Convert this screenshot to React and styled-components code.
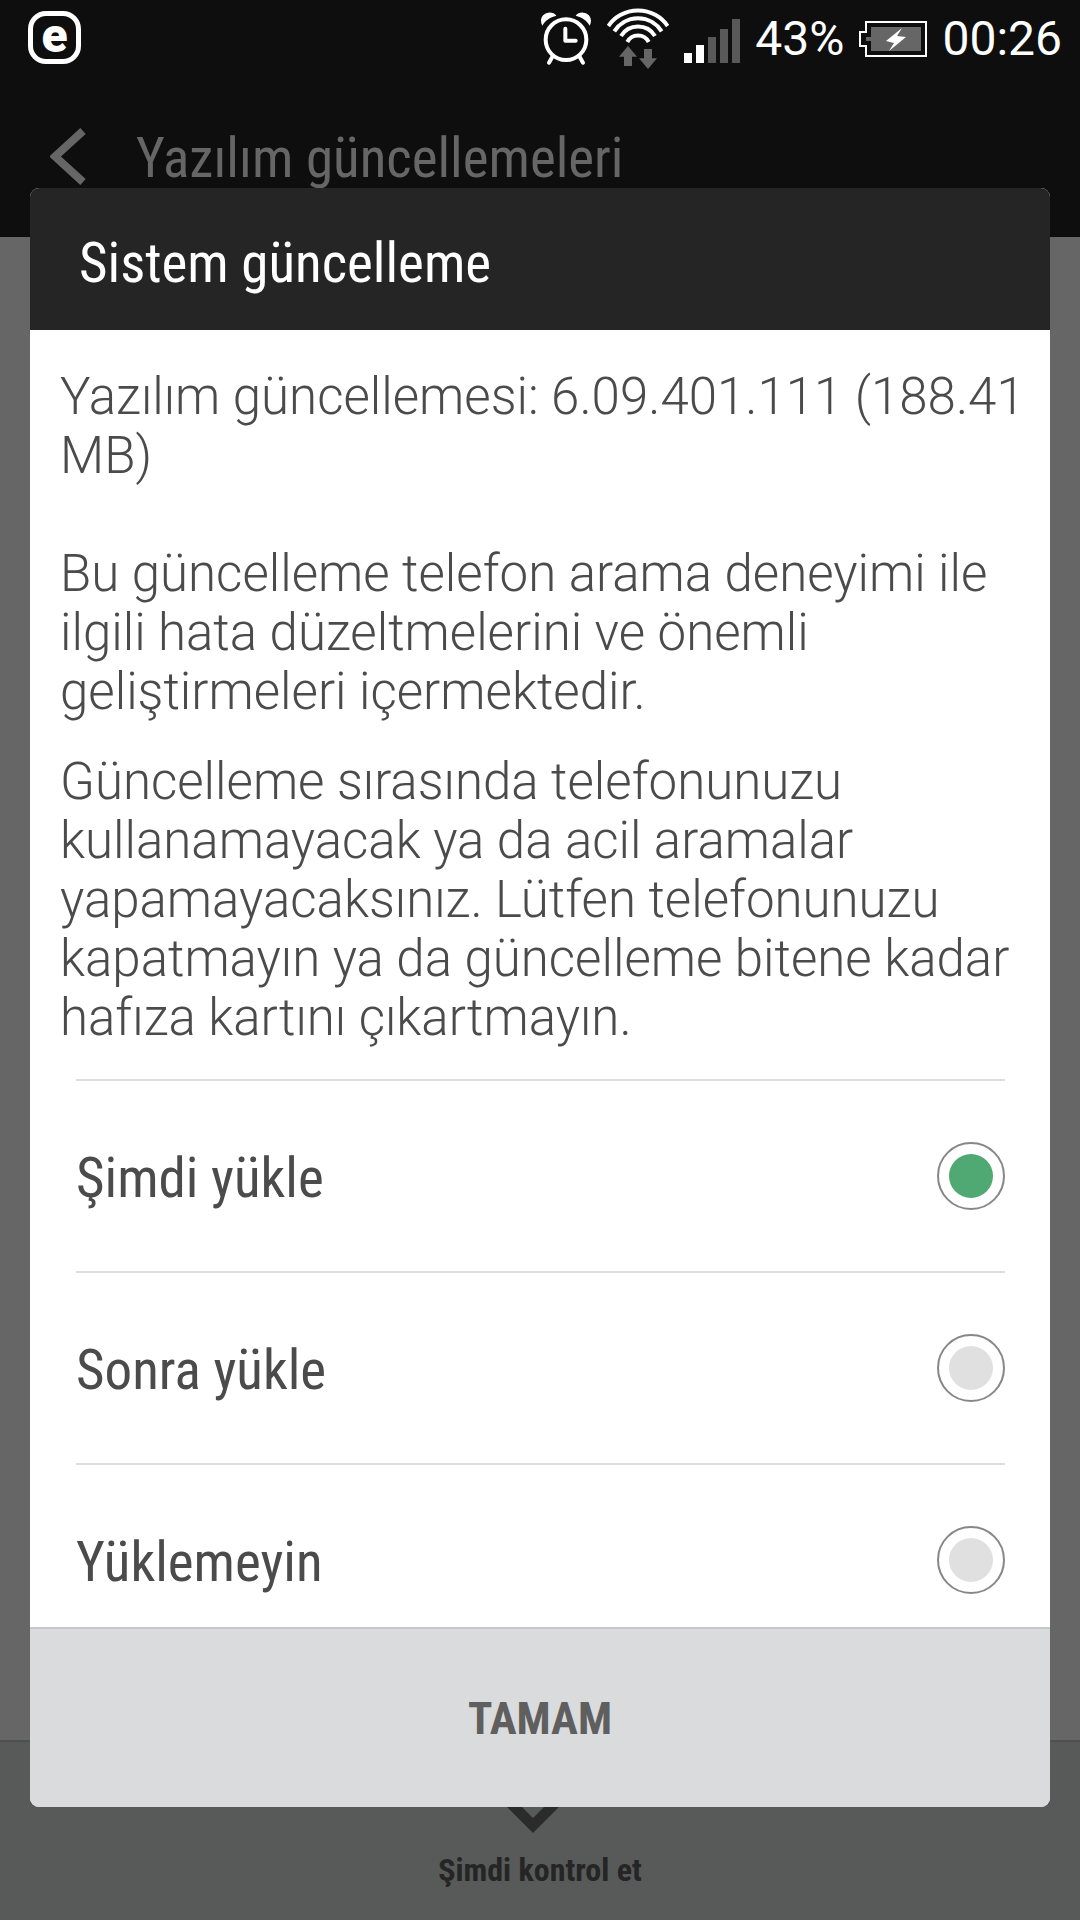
import { useState } from "react";
import styled, { createGlobalStyle } from "styled-components";

const options = [
    { id: "now", label: "Şimdi yükle" },
    { id: "later", label: "Sonra yükle" },
    { id: "never", label: "Yüklemeyin" },
];

function App() {

    // install right away is the default choice
    const [choice, setChoice] = useState("now");

  return (
    <Screen>
            <GlobalStyle />
            <StatusBar>
                <AppBadge>e</AppBadge>
                <StatusGroup>
                    <AlarmIcon />
                    <WifiIcon />
                    <SignalIcon />
                    <span>43%</span>
                    <BatteryIcon />
                    <span>00:26</span>
                </StatusGroup>
            </StatusBar>
            <ActionBar>
                <BackButton aria-label="Geri">
                    <svg width="36" height="57" viewBox="0 0 36 57">
                        <path d="M33 3 L5 28.5 L33 54" fill="none" stroke="#666" strokeWidth="8" />
                    </svg>
                </BackButton>
                <PageTitle>Yazılım güncellemeleri</PageTitle>
            </ActionBar>
            <Content />
            <BottomBar>
                <CheckButton>
                    <svg width="66" height="60" viewBox="0 0 66 60">
                        <path d="M26 0 V20 M2 21.5 L26 45.5 L50 21.5" fill="none" stroke="#2b2b2b" strokeWidth="10.5" />
                    </svg>
                    Şimdi kontrol et
                </CheckButton>
            </BottomBar>

            <Overlay>
                <Dialog role="dialog" aria-labelledby="dialog-title">
                    <DialogTitle id="dialog-title">Sistem güncelleme</DialogTitle>
                    <DialogBody>
                        <Message>
                            <p>Yazılım güncellemesi: 6.09.401.111 (188.41 MB)</p>
                            <br />
                            <p>Bu güncelleme telefon arama deneyimi ile ilgili hata düzeltmelerini ve önemli geliştirmeleri içermektedir.</p>
                            <Warning>Güncelleme sırasında telefonunuzu kullanamayacak ya da acil aramalar yapamayacaksınız. Lütfen telefonunuzu kapatmayın ya da güncelleme bitene kadar hafıza kartını çıkartmayın.</Warning>
                        </Message>
                        <OptionList>
                            {options.map((option) => (
                                <Option key={option.id}>
                                    <OptionLabel htmlFor={option.id}>{option.label}</OptionLabel>
                                    <Radio
                                        id={option.id}
                                        type="radio"
                                        name="install"
                                        checked={choice === option.id}
                                        onChange={() => setChoice(option.id)}
                                    />
                                </Option>
                            ))}
                        </OptionList>
                    </DialogBody>
                    <ConfirmButton>TAMAM</ConfirmButton>
                </Dialog>
            </Overlay>
    </Screen>
  )
}

function AlarmIcon() {
    return (
        <svg width="52" height="54" viewBox="57 32 156 162">
            <circle cx="135" cy="115" r="61" fill="none" stroke="#fff" strokeWidth="12" />
            <path d="M133 82 V118 H164" fill="none" stroke="#fff" strokeWidth="12" strokeLinecap="round" strokeLinejoin="round" />
            <path d="M95 165 L84 184 M175 165 L186 184" stroke="#fff" strokeWidth="12" strokeLinecap="round" />
            <path d="M64 73 C54 54 64 36 83 34 C93 33 101 37 106 43 C87 48 72 58 64 73 Z" fill="#fff" />
            <path d="M206 73 C216 54 206 36 187 34 C177 33 169 37 164 43 C183 48 198 58 206 73 Z" fill="#fff" />
        </svg>
    )
}

function WifiIcon() {
    return (
        <svg width="62" height="62" viewBox="264 21 186 186">
            <g fill="none" stroke="#fff" strokeWidth="12">
                <path d="M268 75 A108 108 0 0 1 446 75" />
                <path d="M286 91 A84 84 0 0 1 428 91" />
                <path d="M306 105 A60 60 0 0 1 408 105" />
                <path d="M325 123 A36 36 0 0 1 389 123" />
            </g>
            <path d="M327 135 L354 167 H339 V195 H315 V167 H300 Z" fill="#666" />
            <path d="M387 204 L414 172 H399 V144 H375 V172 H360 Z" fill="#666" />
        </svg>
    )
}

function SignalIcon() {
    return (
        <svg width="56" height="44" viewBox="0 0 56 44" overflow="visible">
            <path d="M0 36 h8 v10 h-8 Z M12 28 h8 v18 h-8 Z" fill="#fff" />
            <path d="M24 20 h8 v26 h-8 Z M36 12 h8 v34 h-8 Z M48 2 h8 v44 h-8 Z" fill="#595959" />
        </svg>
    )
}

function BatteryIcon() {
    return (
        <svg width="68" height="36" viewBox="0 0 68 36">
            <path d="M7 1 H67 V35 H7 V25 H1 V11 H7 Z" fill="none" stroke="#fff" strokeWidth="2" />
            <path d="M12 6 H62 V30 H12 V20 H7 V16 H12 Z" fill="#666" />
            <path d="M43 7 L27 20 L35 22 L30 30 L47 16 L38 15 Z" fill="#fff" />
        </svg>
    )
}

const GlobalStyle = createGlobalStyle`
    *{
        box-sizing:border-box;
    }
    body{
        margin:0;
        font-family:Roboto, sans-serif;
    }
    button{
        border:none;
        padding:0;
        background:none;
        font-family:inherit;
    }
    svg{
        flex-shrink:0;
    }
`
const Screen = styled.div`
    position:relative;
    min-height:100vh;
    display:flex;
    flex-direction:column;
    background:#666;
`
const StatusBar = styled.header`
    height:75px;
    padding:0 18px 0 28px;
    display:flex;
    align-items:center;
    justify-content:space-between;
    background:#0e0e0e;
    color:white;
`
const AppBadge = styled.span`
    width:53px;
    height:53px;
    border:5px solid white;
    border-radius:18px;
    display:flex;
    align-items:center;
    justify-content:center;
    padding-bottom:4px;
    font-size:48px;
    line-height:1;
    font-weight:900;
`
const StatusGroup = styled.div`
    display:flex;
    align-items:center;
    gap:15px;
    font-size:48px;
    line-height:58px;
    padding-top:2px;
`
const ActionBar = styled.nav`
    height:162px;
    padding:0 50px;
    display:flex;
    align-items:center;
    gap:50px;
    background:#0e0e0e;
`
const BackButton = styled.button`
    display:flex;
`
const PageTitle = styled.h1`
    margin:0;
    padding-top:4px;
    font-family:"Roboto Condensed", Roboto, sans-serif;
    font-size:55px;
    font-weight:400;
    color:#666;
`
const Content = styled.main`
    flex:1;
`
const BottomBar = styled.footer`
    height:180px;
    border-top:2px solid #505050;
    background:#575a59;
`
const CheckButton = styled.button`
    width:100%;
    height:100%;
    padding-bottom:31px;
    display:flex;
    flex-direction:column;
    align-items:center;
    justify-content:flex-end;
    gap:11px;
    font-family:"Roboto Condensed", Roboto, sans-serif;
    font-size:32px;
    font-weight:700;
    color:#252525;
`
const Overlay = styled.div`
    position:absolute;
    inset:0;
    padding:188px 30px 113px;
    display:flex;
`
const Dialog = styled.section`
    flex:1;
    display:flex;
    flex-direction:column;
    border-radius:9px;
    overflow:hidden;
    background:white;
`
const DialogTitle = styled.h2`
    margin:0;
    padding:0 49px;
    height:142px;
    line-height:150px;
    background:#252525;
    color:white;
    font-family:"Roboto Condensed", Roboto, sans-serif;
    font-size:55px;
    font-weight:400;
`
const DialogBody = styled.div`
    flex:1 1 0;
    min-height:0;
    overflow:hidden;
`
const Message = styled.div`
    padding:37px 22px 32px 30px;
    font-size:51px;
    line-height:59px;
    font-weight:300;
    color:#4b4b4b;
    p{
        margin:0;
    }
`
const Warning = styled.p`
    && {
        margin-top:31px;
    }
`
const OptionList = styled.div`
    padding:0 45px 0 46px;
`
const Option = styled.div`
    height:192px;
    border-top:2px solid #dedede;
    display:flex;
    align-items:center;
`
const OptionLabel = styled.label`
    flex:1;
    padding-top:4px;
    font-family:"Roboto Condensed", Roboto, sans-serif;
    font-size:55px;
    color:#4b4b4b;
`
const Radio = styled.input`
    appearance:none;
    width:68px;
    height:68px;
    margin:0;
    padding:10px;
    border:2px solid #878787;
    border-radius:50%;
    background:#e0e0e0 content-box;
    &:checked{
        background-color:#50a872;
    }
`
const ConfirmButton = styled.button`
    height:180px;
    border-top:2px solid #c5c6c6;
    background:#dadbdd;
    font-family:"Roboto Condensed", Roboto, sans-serif;
    font-size:45px;
    font-weight:700;
    color:#5f5f5f;
`

export default App
